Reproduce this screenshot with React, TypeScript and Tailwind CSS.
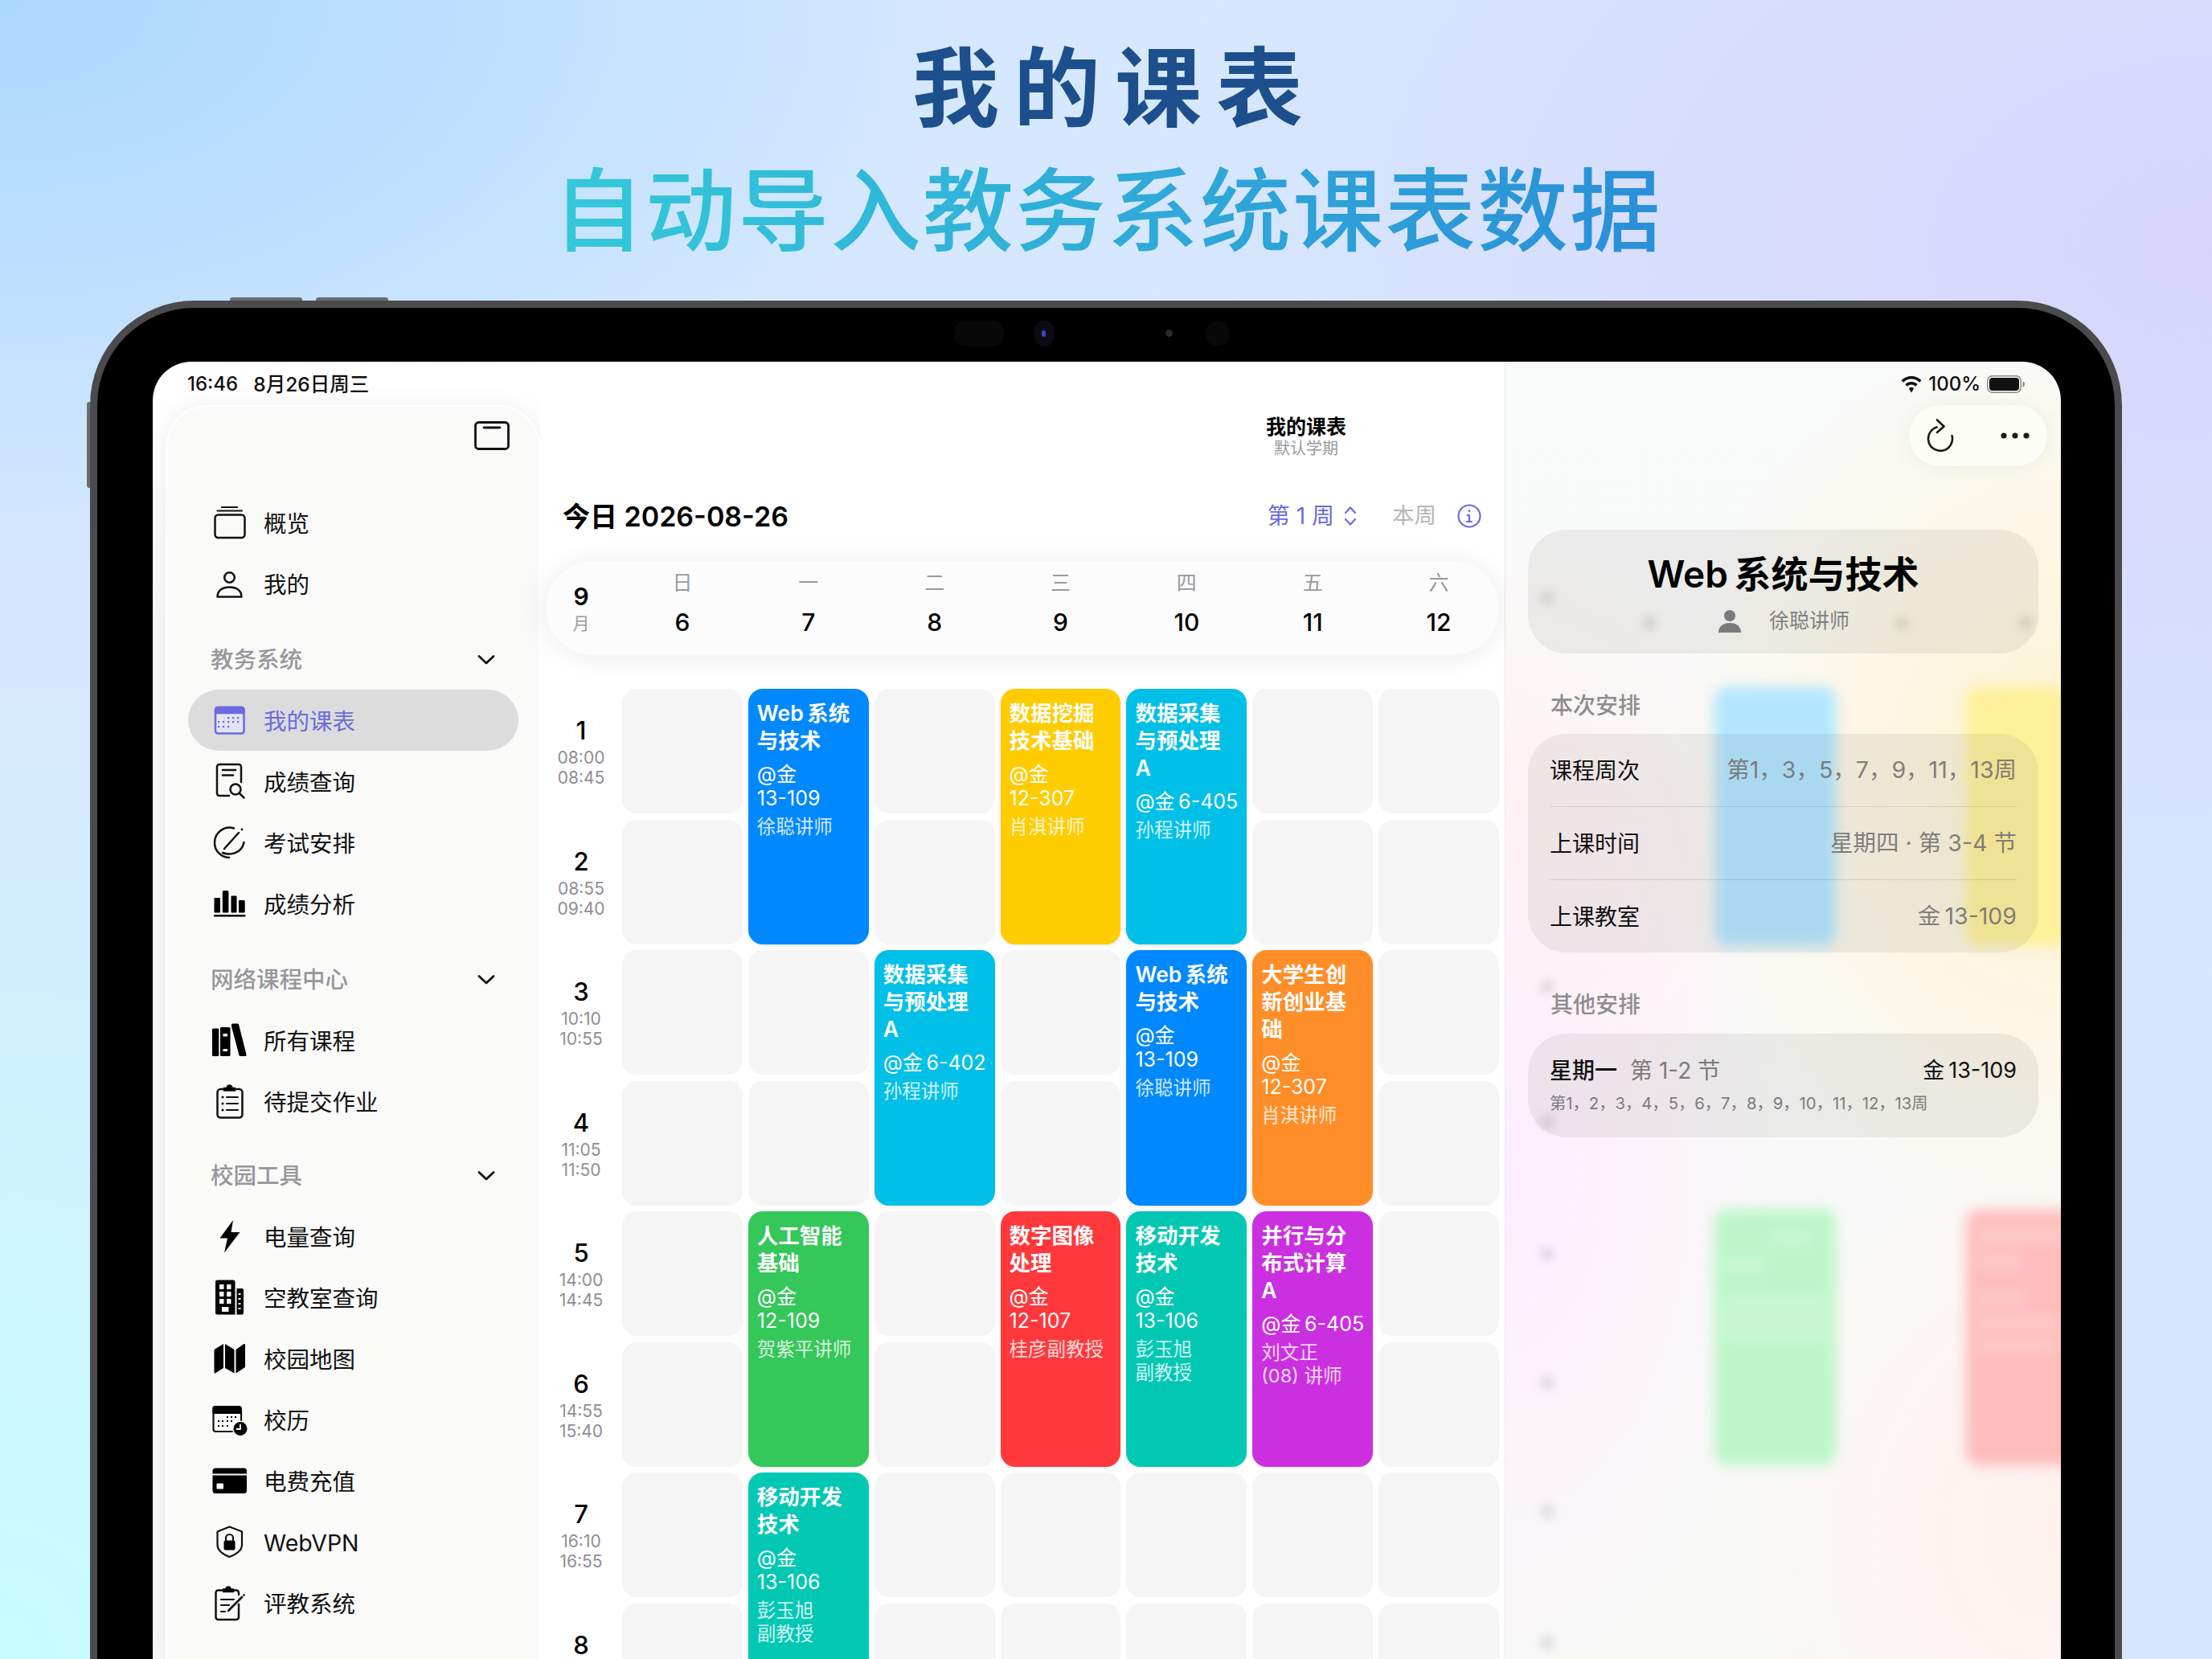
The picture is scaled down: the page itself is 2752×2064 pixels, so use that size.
import React from "react";

const INK = "#111";

function Ico({ children, color = INK }: { children: React.ReactNode; color?: string }) {
  return (
    <svg width="50" height="50" viewBox="0 0 50 50" fill="none" stroke={color} strokeWidth="2.5" strokeLinecap="round" strokeLinejoin="round" className="shrink-0">
      {children}
    </svg>
  );
}

const icons: Record<string, React.ReactNode> = {
  overview: (
    <Ico>
      <rect x="7.5" y="15.5" width="37" height="28.5" rx="4" />
      <path d="M16 6H35M10.5 10.5H41" strokeWidth="2.2" />
    </Ico>
  ),
  user: (
    <Ico>
      <circle cx="25.5" cy="17.5" r="6.3" />
      <path d="M10.5 41.5C10.5 33.5 17 29.5 25.5 29.5C34 29.5 40.5 33.5 40.5 41.5Z" />
    </Ico>
  ),
  calendar: (
    <Ico color="#6b6be0">
      <rect x="8" y="9" width="35.5" height="32.5" rx="3" fill="#e3e3f3" />
      <path d="M8 16V12a3 3 0 0 1 3-3h29.5a3 3 0 0 1 3 3v4Z" fill="#6b6be0" />
      <g fill="#6b6be0" stroke="none">
        {[26, 32, 38].map((x) => <rect key={x} x={x - 3} y="21" width="2.2" height="2.2" />)}
        {[14, 20, 26, 32, 38].map((x) => <rect key={x} x={x - 3} y="26" width="2.2" height="2.2" />)}
        {[14, 20, 26].map((x) => <rect key={x} x={x - 3} y="32" width="2.2" height="2.2" />)}
      </g>
    </Ico>
  ),
  grade: (
    <Ico>
      <path d="M40 26V7a3 3 0 0 0-3-3H13a3 3 0 0 0-3 3v33a3 3 0 0 0 3 3h12" />
      <path d="M17 11H33M17 17.5H30" />
      <circle cx="33" cy="35" r="6.5" />
      <path d="M38 40L43.5 45.5" />
    </Ico>
  ),
  exam: (
    <Ico>
      <path d="M31 7.5A18.5 18.5 0 0 0 7 25A18.5 18.5 0 0 0 25 44" />
      <path d="M17 38C27 42 41 38 43.5 25" />
      <path d="M19 33L37 13" />
      <circle cx="41" cy="9" r="1.4" fill={INK} stroke="none" />
    </Ico>
  ),
  bars: (
    <Ico>
      <g fill="#000" stroke="none">
        <rect x="6.5" y="18" width="7.5" height="18.5" rx="1" />
        <rect x="16.8" y="9" width="7.6" height="27.5" rx="1.5" />
        <rect x="27.5" y="15.4" width="7" height="21" rx="1" />
        <rect x="37" y="21" width="7.7" height="15.5" rx="1" />
        <rect x="6" y="39" width="39.5" height="2.4" rx="1" />
      </g>
    </Ico>
  ),
  books: (
    <Ico>
      <g stroke="none">
        <rect x="4" y="10.5" width="8.3" height="34.5" rx="1.5" fill="#000" />
        <rect x="14" y="9" width="12.5" height="36" rx="1.5" fill="#000" />
        <rect x="17.5" y="17" width="5.5" height="3.5" fill="#fafaf9" />
        <rect x="17.5" y="36" width="5.5" height="3" fill="#fafaf9" />
        <path d="M28 6a1.500 1.500 0 0 1 1.500-1.500h6a1.500 1.500 0 0 1 1.500 1L46.500 43a1.500 1.500 0 0 1-1.500 2H39a1.500 1.500 0 0 1-1.500-1L28 8Z" fill="#000" />
      </g>
    </Ico>
  ),
  clip: (
    <Ico>
      <path d="M18 10H14.500a4 4 0 0 0-4 4v27.500a4 4 0 0 0 4 4h23a4 4 0 0 0 4-4V14a4 4 0 0 0-4-4H33" />
      <path d="M18.500 12V8.500h3.500a3.500 3.500 0 0 1 7 0h3.500V12Z" fill="#000" strokeWidth="1.500" />
      <path d="M22 20H36M22 28H36M22 36H36" strokeWidth="2" />
      <g fill="#000" stroke="none"><circle cx="17" cy="20" r="1.500" /><circle cx="17" cy="28" r="1.500" /><circle cx="17" cy="36" r="1.500" /></g>
    </Ico>
  ),
  bolt: (
    <Ico>
      <path d="M30 5L13.500 27.500H23L19 45.500L38.500 20H27.500Z" fill="#000" stroke="none" />
    </Ico>
  ),
  building: (
    <Ico>
      <g stroke="none">
        <path d="M8 6a2.500 2.500 0 0 1 2.500-2.500H30A2.500 2.500 0 0 1 32.500 6V46.500H10.500A2.500 2.500 0 0 1 8 44Z" fill="#000" />
        <path d="M34.500 14H41a2 2 0 0 1 2 2V44.500a2 2 0 0 1-2 2H34.500Z" fill="#000" />
        {[9, 18, 27].map((y) => (
          <g key={y} fill="#fafaf9">
            <rect x="13" y={y} width="5.500" height="6" />
            <rect x="22" y={y} width="5.500" height="6" />
          </g>
        ))}
        <rect x="16" y="37" width="8.500" height="6" fill="#fafaf9" />
        {[20, 26, 32, 38].map((y) => <rect key={y} x="36.500" y={y} width="3" height="2" fill="#fafaf9" />)}
      </g>
    </Ico>
  ),
  map: (
    <Ico>
      <g fill="#000" stroke="none">
        <path d="M6.500 14L18 7V37L8 43.300Q6.500 44 6.500 42Z" />
        <path d="M20 7L31.500 14V43.500L20 37Z" />
        <path d="M33.500 14L43 7.300Q45 6.500 45 8V36L33.500 43.500Z" />
      </g>
    </Ico>
  ),
  schedule: (
    <Ico>
      <rect x="5.500" y="9" width="34.500" height="31" rx="3" strokeWidth="2.200" />
      <path d="M4.500 18V11a3 3 0 0 1 3-3H37a3 3 0 0 1 3 3v7Z" fill="#000" stroke="none" />
      <g fill="#000" stroke="none">
        {[22, 27, 32].map((x) => <rect key={x} x={x} y="21" width="2" height="2" />)}
        {[11, 16, 22, 27].map((x) => <rect key={x} x={x} y="26" width="2" height="2" />)}
        {[11, 16, 22].map((x) => <rect key={x} x={x} y="32" width="2" height="2" />)}
      </g>
      <circle cx="39" cy="36.500" r="10" fill="#fafaf9" stroke="none" />
      <circle cx="39" cy="36.500" r="8.500" fill="#000" stroke="none" />
      <path d="M39 31.500V37H34.500" stroke="#fafaf9" strokeWidth="1.800" />
    </Ico>
  ),
  card: (
    <Ico>
      <path d="M4.500 13a3.500 3.500 0 0 1 3.500-3.500H43.500A3.500 3.500 0 0 1 47 13V16.500H4.500Z" fill="#000" stroke="none" />
      <path d="M4.500 18.500H47V37.500a3.500 3.500 0 0 1-3.500 3.500H8a3.500 3.500 0 0 1-3.500-3.500Z" fill="#000" stroke="none" />
      <rect x="9.500" y="28.500" width="8.500" height="7" rx="1" fill="#fafaf9" stroke="none" />
    </Ico>
  ),
  shield: (
    <Ico>
      <path d="M25.500 6.500L41 12.500V29C41 36 33 41 25.500 44C18 41 10.500 36 10.500 29V12.500Z" strokeWidth="2.200" />
      <rect x="18.500" y="23.500" width="14" height="12" rx="2" fill="#000" stroke="none" />
      <path d="M21 24V20.500a4.500 4.500 0 0 1 9 0V24" strokeWidth="2.200" />
    </Ico>
  ),
  review: (
    <Ico>
      <path d="M17 9.500H11.500a3 3 0 0 0-3 3V43a3 3 0 0 0 3 3H34a3 3 0 0 0 3-3V27" />
      <path d="M31 9.500H34a3 3 0 0 1 3 3V15" />
      <path d="M17.500 11.500V8h3.500a3 3 0 0 1 6 0h3.500v3.500Z" fill="#000" strokeWidth="1.500" />
      <path d="M15 21H31M15 28H25M15 36H20" strokeWidth="2.200" />
      <path d="M24 35L41 18" strokeWidth="2.800" />
      <circle cx="43.500" cy="15.500" r="1.300" fill="#000" stroke="none" />
    </Ico>
  ),
};

function Chevron() {
  return (
    <svg width="22" height="14" viewBox="0 0 22 14" fill="none" stroke="#111" strokeWidth="2.800" strokeLinecap="round" strokeLinejoin="round">
      <path d="M2 2.500L11 11L20 2.500" />
    </svg>
  );
}

function NavRow({ icon, label, active }: { icon: string; label: string; active?: boolean }) {
  return (
    <div className={active ? "ml-[26px] mr-[25px] flex h-[76px] items-center gap-[18px] rounded-full bg-[#dcdcdc] pl-[26px] text-[28.5px] text-[#6b6be0]" : "ml-[26px] mr-[25px] flex h-[76px] items-center gap-[18px] pl-[26px] text-[28.5px] text-[#111]"}>
      {icons[icon]}
      <span className="pt-[4px]">{label}</span>
    </div>
  );
}

function NavSection({ label, className }: { label: string; className: string }) {
  return (
    <div className={className}>
      <span className="text-[28.5px] font-medium text-[#97979a]">{label}</span>
      <Chevron />
    </div>
  );
}

function Sidebar() {
  return (
    <aside className="h-full w-[482px] shrink-0 bg-[linear-gradient(#ffffff,#f7f7f7_20%)] pl-[16px] pt-[54px]">
      <div className="h-full w-[466px] rounded-t-[52px] border-2 border-b-0 border-white bg-[#fafaf9] shadow-[0_0_30px_rgba(0,0,0,0.05)]">
        <div className="flex h-[106px] justify-end pr-[36px] pt-[18px]">
          <svg width="44" height="36" viewBox="0 0 44 36" fill="none" stroke="#111" strokeWidth="2.800" strokeLinecap="round">
            <rect x="1.500" y="1.500" width="41" height="33" rx="4" />
            <path d="M12 8H32" />
          </svg>
        </div>
        <NavRow icon="overview" label="概览" />
        <NavRow icon="user" label="我的" />
        <NavSection label="教务系统" className="ml-[54px] mr-[54px] mt-[18px] flex h-[76px] items-center justify-between pt-[2px]" />
        <NavRow icon="calendar" label="我的课表" active />
        <NavRow icon="grade" label="成绩查询" />
        <NavRow icon="exam" label="考试安排" />
        <NavRow icon="bars" label="成绩分析" />
        <NavSection label="网络课程中心" className="ml-[54px] mr-[54px] mt-[18px] flex h-[76px] items-center justify-between pt-[2px]" />
        <NavRow icon="books" label="所有课程" />
        <NavRow icon="clip" label="待提交作业" />
        <NavSection label="校园工具" className="ml-[54px] mr-[54px] mt-[16px] flex h-[76px] items-center justify-between pt-[2px]" />
        <NavRow icon="bolt" label="电量查询" />
        <NavRow icon="building" label="空教室查询" />
        <NavRow icon="map" label="校园地图" />
        <NavRow icon="schedule" label="校历" />
        <NavRow icon="card" label="电费充值" />
        <NavRow icon="shield" label="WebVPN" />
        <NavRow icon="review" label="评教系统" />
      </div>
    </aside>
  );
}

type Course = { span: number; color: string; title: string[]; loc: string[]; teacher: string[] };
const BLUE = "bg-[#0088ff]";
const YELLOW = "bg-[#ffcc00]";
const CYAN = "bg-[#00c0e8]";
const ORANGE = "bg-[#ff8d28]";
const GREEN = "bg-[#34c759]";
const RED = "bg-[#ff383c]";
const MINT = "bg-[#00c8b3]";
const PURPLE = "bg-[#cb30e0]";

const courses: Record<string, Course> = {
  "0-1": { span: 2, color: BLUE, title: ["Web\u2009系统", "与技术"], loc: ["@金", "13-109"], teacher: ["徐聪讲师"] },
  "0-3": { span: 2, color: YELLOW, title: ["数据挖掘", "技术基础"], loc: ["@金", "12-307"], teacher: ["肖淇讲师"] },
  "0-4": { span: 2, color: CYAN, title: ["数据采集", "与预处理", "A"], loc: ["@金\u20096-405"], teacher: ["孙程讲师"] },
  "2-2": { span: 2, color: CYAN, title: ["数据采集", "与预处理", "A"], loc: ["@金\u20096-402"], teacher: ["孙程讲师"] },
  "2-4": { span: 2, color: BLUE, title: ["Web\u2009系统", "与技术"], loc: ["@金", "13-109"], teacher: ["徐聪讲师"] },
  "2-5": { span: 2, color: ORANGE, title: ["大学生创", "新创业基", "础"], loc: ["@金", "12-307"], teacher: ["肖淇讲师"] },
  "4-1": { span: 2, color: GREEN, title: ["人工智能", "基础"], loc: ["@金", "12-109"], teacher: ["贺紫平讲师"] },
  "4-3": { span: 2, color: RED, title: ["数字图像", "处理"], loc: ["@金", "12-107"], teacher: ["桂彦副教授"] },
  "4-4": { span: 2, color: MINT, title: ["移动开发", "技术"], loc: ["@金", "13-106"], teacher: ["彭玉旭", "副教授"] },
  "4-5": { span: 2, color: PURPLE, title: ["并行与分", "布式计算", "A"], loc: ["@金\u20096-405"], teacher: ["刘文正", "(08) 讲师"] },
  "6-1": { span: 2, color: MINT, title: ["移动开发", "技术"], loc: ["@金", "13-106"], teacher: ["彭玉旭", "副教授"] },
};

const periods = [
  ["1", "08:00", "08:45"],
  ["2", "08:55", "09:40"],
  ["3", "10:10", "10:55"],
  ["4", "11:05", "11:50"],
  ["5", "14:00", "14:45"],
  ["6", "14:55", "15:40"],
  ["7", "16:10", "16:55"],
  ["8"],
];

function CourseCard({ c }: { c: Course }) {
  return (
    <div className={`row-span-2 overflow-hidden rounded-[18px] px-[11px] pt-[13px] text-white shadow-[0_1px_5px_rgba(0,0,0,0.1)] ${c.color}`}>
      <div className="text-[26.5px] font-semibold leading-[34px]">
        {c.title.map((t) => <div key={t} className="whitespace-nowrap">{t}</div>)}
      </div>
      <div className="mt-[10px] text-[25px] leading-[30px]">
        {c.loc.map((t) => <div key={t} className="whitespace-nowrap">{t}</div>)}
      </div>
      <div className="mt-[6px] text-[23.5px] leading-[29px] text-white/80">
        {c.teacher.map((t) => <div key={t} className="whitespace-nowrap">{t}</div>)}
      </div>
    </div>
  );
}

function Schedule() {
  const cells: React.ReactNode[] = [];
  const covered = new Set<string>();
  periods.forEach((p, r) => {
    cells.push(
      <div key={`t${r}`} className="flex flex-col items-center pt-[35px]">
        <span className="mb-[4px] text-[31px] font-medium leading-[34px] text-black">{p[0]}</span>
        {p[1] && <span className="text-[21px] leading-[25px] text-[#8e8e93]">{p[1]}</span>}
        {p[2] && <span className="text-[21px] leading-[25px] text-[#8e8e93]">{p[2]}</span>}
      </div>
    );
    for (let d = 0; d < 7; d++) {
      const key = `${r}-${d}`;
      if (covered.has(key)) continue;
      const c = courses[key];
      if (c) {
        covered.add(`${r + 1}-${d}`);
        cells.push(<CourseCard key={key} c={c} />);
      } else {
        cells.push(<div key={key} className="rounded-[18px] bg-[#f5f5f5]" />);
      }
    }
  });
  return (
    <div className="ml-[7px] mt-[42px] grid grid-cols-[88px_repeat(7,149.86px)] grid-rows-[repeat(8,155px)] gap-x-[7px] gap-y-[7.5px]">
      {cells}
    </div>
  );
}

function DatePill() {
  const days = [["日", "6"], ["一", "7"], ["二", "8"], ["三", "9"], ["四", "10"], ["五", "11"], ["六", "12"]];
  return (
    <div className="ml-[7px] mt-[36px] grid h-[117px] w-[1186px] grid-cols-[88px_repeat(7,149.86px)] gap-x-[7px] rounded-[58px] bg-[#fcfcfc] shadow-[0_2px_40px_rgba(0,0,0,0.08)]">
      <div className="flex flex-col items-center pt-[27px]">
        <span className="text-[30px] font-semibold leading-[34px] text-black">9</span>
        <span className="mt-[4px] text-[21px] leading-[26px] text-[#99999c]">月</span>
      </div>
      {days.map(([n, d]) => (
        <div key={n} className="flex flex-col items-center pt-[12px]">
          <span className="text-[25px] leading-[30px] text-[#99999c]">{n}</span>
          <span className="mt-[16px] text-[30px] font-medium leading-[36px] text-black">{d}</span>
        </div>
      ))}
    </div>
  );
}

function Main() {
  return (
    <main className="h-full w-[1201px] shrink-0 border-r border-[#e9e9e9] bg-white">
      <div className="flex justify-end pr-[197px] pt-[66px]">
        <div className="flex flex-col items-center">
          <div className="text-[25px] font-semibold leading-[30px] text-black">我的课表</div>
          <div className="text-[20px] leading-[24px] text-[#99999c]">默认学期</div>
        </div>
      </div>
      <div className="mt-[52px] flex h-[40px] items-center pl-[28px] pr-[29px]">
        <span className="text-[34px] font-semibold text-black">今日 2026-08-26</span>
        <span className="ml-auto text-[28px] text-[#6b6be0]">第 1 周</span>
        <svg width="18" height="28" viewBox="0 0 18 28" fill="none" stroke="#6b6be0" strokeWidth="2.200" strokeLinecap="round" strokeLinejoin="round" className="ml-[11px]">
          <path d="M3 10L9 3.500L15 10M3 18L9 24.500L15 18" />
        </svg>
        <span className="ml-[43px] text-[27.5px] text-[#b6b6b8]">本周</span>
        <svg width="30" height="30" viewBox="0 0 30 30" fill="none" stroke="#6b6be0" strokeWidth="2.200" strokeLinecap="round" className="ml-[26px]">
          <circle cx="15" cy="15" r="13.500" />
          <path d="M15 14V22M12.500 14H15M12 22H18" />
          <circle cx="15" cy="8.500" r="1.500" fill="#6b6be0" stroke="none" />
        </svg>
      </div>
      <DatePill />
      <Schedule />
    </main>
  );
}

const ghostDots: [number, number][] = [
  [52, 293], [179, 325], [493, 325], [647, 325],
  [52, 778], [52, 946], [52, 1110], [52, 1270], [52, 1430], [52, 1594],
];

function GhostLayer() {
  return (
    <div className="absolute inset-0">
      <div className="absolute inset-0 bg-[radial-gradient(ellipse_70%_35%_at_100%_32%,#fff3cf_0%,rgba(255,243,207,0)_100%),radial-gradient(ellipse_50%_40%_at_0%_62%,#fdeefd_0%,rgba(253,238,253,0)_100%),radial-gradient(ellipse_60%_30%_at_100%_90%,#fff1ee_0%,rgba(255,241,238,0)_100%),radial-gradient(ellipse_50%_25%_at_0%_38%,#fff2f0_0%,rgba(255,242,240,0)_100%),linear-gradient(#f9fafa,#f8f8f7)]" />
      <div className="absolute left-[260px] top-[405px] h-[322px] w-[151px] rounded-[16px] bg-[#b3e6ff] blur-[8px]" />
      <div className="absolute left-[573px] top-[405px] h-[322px] w-[160px] rounded-[16px] bg-[#fff09b] blur-[8px]" />
      <div className="absolute left-[260px] top-[1055px] h-[318px] w-[151px] rounded-[16px] bg-[#bcf6c8] blur-[8px]">
        <div className="absolute left-[70px] top-[26px] h-[18px] w-[50px] bg-white/20" />
        <div className="absolute left-[12px] top-[60px] h-[18px] w-[50px] bg-white/20" />
        <div className="absolute left-[12px] top-[106px] h-[60px] w-[130px] bg-white/20" />
      </div>
      <div className="absolute left-[573px] top-[1055px] h-[318px] w-[160px] rounded-[16px] bg-[#ffbcbc] blur-[8px]">
        <div className="absolute left-[14px] top-[22px] h-[20px] w-[110px] bg-white/20" />
        <div className="absolute left-[14px] top-[56px] h-[20px] w-[55px] bg-white/20" />
        <div className="absolute left-[14px] top-[100px] h-[18px] w-[60px] bg-white/20" />
        <div className="absolute left-[14px] top-[130px] h-[18px] w-[100px] bg-white/20" />
        <div className="absolute left-[14px] top-[160px] h-[18px] w-[100px] bg-white/20" />
      </div>
      {ghostDots.map(([x, y]) => (
        <div key={`${x}-${y}`} style={{ left: x - 9, top: y - 9 }} className="absolute h-[18px] w-[18px] rounded-full bg-black/10 blur-[6px]" />
      ))}
    </div>
  );
}

function InfoRow({ label, value, line }: { label: string; value: string; line?: boolean }) {
  return (
    <>
      <div className="flex h-[90px] items-center justify-between pt-[1px] text-[28px]">
        <span className="text-[#111]">{label}</span>
        <span className="text-[28.5px] text-[#707070]/90">{value}</span>
      </div>
      {line && <div className="h-px bg-black/10" />}
    </>
  );
}

function Detail() {
  return (
    <section className="relative h-full flex-1 overflow-hidden">
      <GhostLayer />
      <div className="relative pt-[54px]">
        <div className="flex justify-end pr-[17px]">
          <div className="flex h-[76px] w-[172px] items-center justify-between rounded-[38px] bg-[#fdfdf8] pl-[22px] pr-[22px] shadow-[0_2px_30px_rgba(0,0,0,0.05)]">
            <svg width="34" height="42" viewBox="0 0 34 42" fill="none" stroke="#1a1a1a" strokeWidth="2.600" strokeLinecap="round" strokeLinejoin="round">
              <path d="M12.500 10.500A15 15 0 1 0 31.500 21" />
              <path d="M13 1.500L21.500 9.500L13 17" />
            </svg>
            <svg width="36" height="8" viewBox="0 0 36 8" fill="#1a1a1a">
              <circle cx="4" cy="4" r="3.600" /><circle cx="18" cy="4" r="3.600" /><circle cx="32" cy="4" r="3.600" />
            </svg>
          </div>
        </div>
        <div className="mx-[28px] mt-[79px] flex h-[154px] flex-col items-center rounded-[48px] bg-[rgba(90,90,80,0.09)] pt-[28px]">
          <div className="text-[46px] font-semibold leading-[54px] text-black">Web{"\u2009"}系统与技术</div>
          <div className="mt-[12px] flex h-[40px] items-center gap-[35px] pl-[2px]">
            <svg width="28" height="30" viewBox="0 0 28 30" fill="#7a7a7a">
              <circle cx="14" cy="8" r="7" />
              <path d="M0 29C0 21 6 17 14 17C22 17 28 21 28 29Z" />
            </svg>
            <span className="text-[25px] text-[#808080]">徐聪讲师</span>
          </div>
        </div>
        <div className="ml-[56px] mt-[48px] text-[28px] font-medium leading-[34px] text-[#8d8d8f]">本次安排</div>
        <div className="mx-[28px] mt-[18px] rounded-[48px] bg-[rgba(90,90,80,0.09)] px-[27px]">
          <InfoRow label="课程周次" value="第1，3，5，7，9，11，13周" line />
          <InfoRow label="上课时间" value="星期四 · 第 3-4 节" line />
          <InfoRow label="上课教室" value={"金\u200913-109"} />
        </div>
        <div className="ml-[56px] mt-[48px] text-[28px] font-medium leading-[34px] text-[#8d8d8f]">其他安排</div>
        <div className="mx-[28px] mt-[19px] h-[129px] rounded-[48px] bg-[rgba(90,90,80,0.09)] px-[27px] pt-[27px]">
          <div className="flex h-[38px] items-center justify-between">
            <span className="text-[28px] font-medium text-[#111]">
              星期一<span className="ml-[16px] font-normal text-[#7b7b7b]">第 1-2 节</span>
            </span>
            <span className="text-[27px] text-[#111]">金{"\u2009"}13-109</span>
          </div>
          <div className="mt-[9px] text-[20.3px] leading-[26px] text-[#7b7b7b]">第1，2，3，4，5，6，7，8，9，10，11，12，13周</div>
        </div>
      </div>
    </section>
  );
}

function StatusBar() {
  return (
    <div className="absolute inset-x-0 top-0 z-10 flex h-[56px] items-center justify-between pl-[43px] pr-[44px] text-[24px] font-medium text-[#111]">
      <div className="flex gap-[19px]">
        <span>16:46</span>
        <span className="text-[24.5px]">8月26日周三</span>
      </div>
      <div className="flex items-center">
        <svg width="26" height="21" viewBox="0 0 26 21" fill="#111">
          <path d="M13 0C8 0 3.500 2 0.500 5.300L3 7.800C5.500 5 9 3.500 13 3.500C17 3.500 20.500 5 23 7.800L25.500 5.300C22.500 2 18 0 13 0Z" />
          <path d="M13 7C10 7 7.300 8.200 5.400 10.200L7.900 12.700C9.200 11.300 11 10.500 13 10.500C15 10.500 16.800 11.300 18.100 12.700L20.600 10.200C18.700 8.200 16 7 13 7Z" />
          <path d="M13 14C11.800 14 10.700 14.500 9.900 15.300L13 20.500L16.100 15.300C15.300 14.500 14.200 14 13 14Z" />
        </svg>
        <span className="ml-[8px]">100%</span>
        <svg width="48" height="22" viewBox="0 0 48 22" fill="none" className="ml-[8px]">
          <rect x="0.800" y="0.800" width="41.500" height="20.400" rx="6" stroke="#8a8a8a" strokeWidth="1.500" />
          <rect x="3" y="3" width="37" height="16" rx="4" fill="#111" />
          <path d="M44.500 7.500C46.500 8 47 9.500 47 11C47 12.500 46.500 14 44.500 14.500Z" fill="#8a8a8a" />
        </svg>
      </div>
    </div>
  );
}

function Device() {
  return (
    <div className="relative ml-[112px] w-[2528px] rounded-t-[130px] border-[9.500px] border-b-0 border-[#4b4b4e] bg-black pl-[69px] pr-[67px] pt-[67px]">
      <div className="absolute left-[165px] top-[-13px] h-[4px] w-[90px] rounded-t-[3px] bg-[#6b6b6e]" />
      <div className="absolute left-[272px] top-[-13px] h-[4px] w-[90px] rounded-t-[3px] bg-[#6b6b6e]" />
      <div className="absolute left-[-13px] top-[117px] h-[107px] w-[4px] rounded-l-[3px] bg-[#6b6b6e]" />
      <div className="absolute left-[1066px] top-[16px] h-[32px] w-[62px] rounded-[14px] bg-[#080808]" />
      <div className="absolute left-[1166px] top-[16px] h-[32px] w-[24px] rounded-[12px] bg-[#0b0b14]" />
      <div className="absolute left-[1175px] top-[28px] h-[8px] w-[5px] rounded-full bg-[#3b46b8]" />
      <div className="absolute left-[1329px] top-[27px] h-[9px] w-[9px] rounded-full bg-[#2a2a2a]" />
      <div className="absolute left-[1379px] top-[16px] h-[32px] w-[30px] rounded-[15px] bg-[#080808]" />
      <div className="relative flex h-[1614px] overflow-hidden rounded-t-[48px]">
        <StatusBar />
        <Sidebar />
        <Main />
        <Detail />
      </div>
    </div>
  );
}

export default function App() {
  return (
    <div className="h-[2064px] w-[2752px] overflow-hidden bg-[radial-gradient(ellipse_45%_35%_at_0%_0%,#a9d8ff_0%,rgba(169,216,255,0)_100%),radial-gradient(ellipse_50%_45%_at_100%_15%,#d8d5fb_0%,rgba(216,213,251,0)_100%),radial-gradient(ellipse_40%_60%_at_0%_100%,#c6fdff_0%,rgba(198,253,255,0)_100%),linear-gradient(#d6e8ff,#d6e8ff)] font-[Inter,'Noto_Sans_CJK_SC',sans-serif]">
      <header className="flex h-[374px] flex-col items-center pt-[45px]">
        <h1 className="ml-[22px] text-[108px] font-bold leading-[130px] tracking-[18px] text-[#1d4f8c]">我的课表</h1>
        <h2 className="ml-[4px] mt-[22px] bg-[linear-gradient(90deg,#34c9d9,#2a8fd8)] bg-clip-text text-[113px] font-medium leading-[130px] tracking-[2px] text-transparent">
          自动导入教务系统课表数据
        </h2>
      </header>
      <Device />
    </div>
  );
}
